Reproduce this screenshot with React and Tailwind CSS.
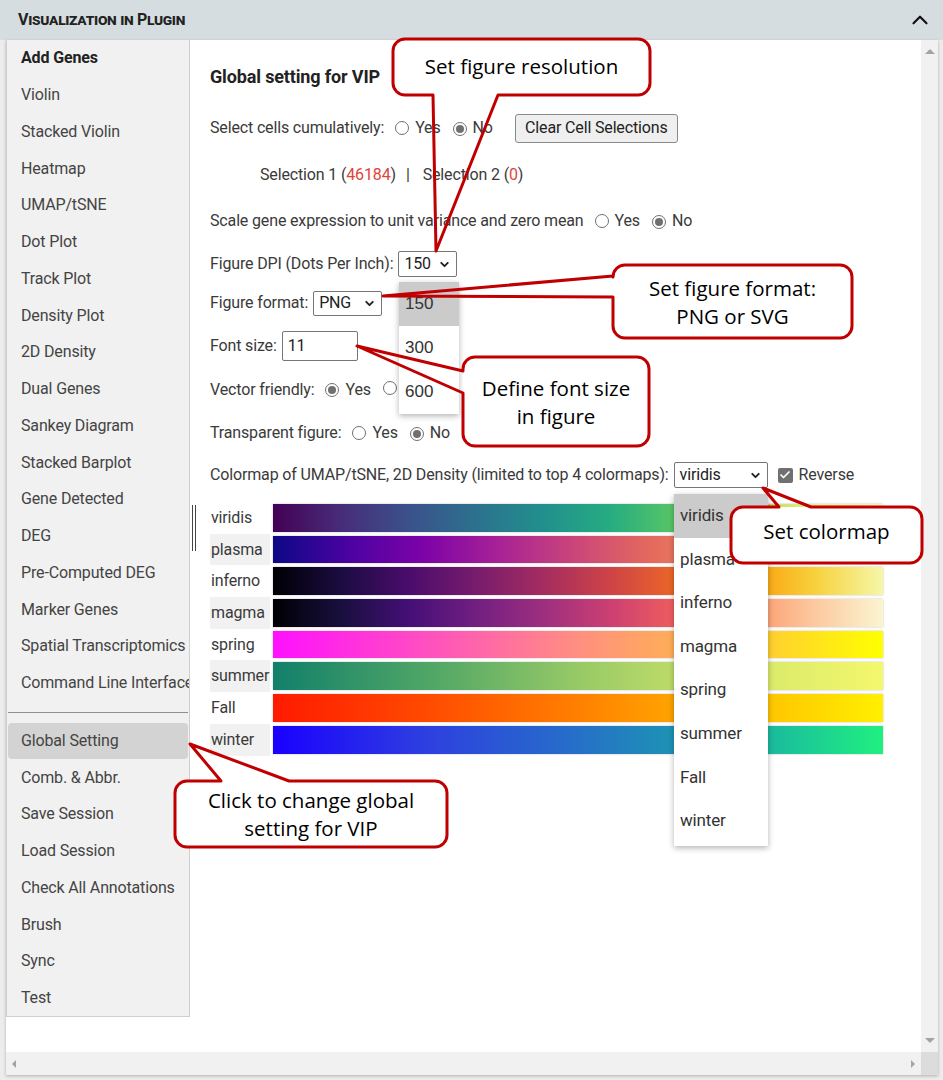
import { ChevronUp, ChevronDown, Check } from 'lucide-react';

const NAV_TOP = [
  'Add Genes', 'Violin', 'Stacked Violin', 'Heatmap', 'UMAP/tSNE', 'Dot Plot', 'Track Plot',
  'Density Plot', '2D Density', 'Dual Genes', 'Sankey Diagram', 'Stacked Barplot', 'Gene Detected',
  'DEG', 'Pre-Computed DEG', 'Marker Genes', 'Spatial Transcriptomics', 'Command Line Interface',
];
const NAV_BOTTOM = [
  'Global Setting', 'Comb. & Abbr.', 'Save Session', 'Load Session', 'Check All Annotations', 'Brush', 'Sync', 'Test',
];

const COLORMAPS = [
  { name: 'viridis', bar: 'bg-[linear-gradient(to_right,#440154,#472c7a,#3b518b,#2c718e,#21908d,#27ad81,#5cc863,#aadc32,#e8ef9c,#f6f9c4)]' },
  { name: 'plasma', bar: 'bg-[linear-gradient(to_right,#0d0887,#4c02a1,#7e03a8,#a92395,#cc4778,#e56b5d,#f39163,#f9c48a,#f4f3a0)]' },
  { name: 'inferno', bar: 'bg-[linear-gradient(to_right,#000004,#1b0c41,#4a0c6b,#781c6d,#a52c60,#cf4446,#ed6925,#fb9b06,#f7d13d,#f6f7a8)]' },
  { name: 'magma', bar: 'bg-[linear-gradient(to_right,#000004,#180f3d,#440f76,#721f81,#9e2f7f,#cd4071,#f1605d,#fd9668,#fcc9a0,#fbf5d0)]' },
  { name: 'spring', bar: 'bg-[linear-gradient(to_right,#ff10ff,#ff4fc0,#ff8f80,#ffc040,#ffff00)]' },
  { name: 'summer', bar: 'bg-[linear-gradient(to_right,#12806a,#4ea566,#97c966,#d2e66a,#f4f86c)]' },
  { name: 'Fall', bar: 'bg-[linear-gradient(to_right,#ff1a00,#ff4a00,#ff8000,#ffb800,#fff000)]' },
  { name: 'winter', bar: 'bg-[linear-gradient(to_right,#1a00ff,#2e3fe0,#2670c8,#18a8a8,#20f080)]' },
];

// rounded box with a pointer wedge on one edge; a<b along that edge
const calloutPath = ({ x, y, w, h, r, side, a, b, px, py }) => {
  let d = `M ${x + r} ${y}`;
  if (side === 'top') d += ` L ${a} ${y} L ${px} ${py} L ${b} ${y}`;
  d += ` L ${x + w - r} ${y} A ${r} ${r} 0 0 1 ${x + w} ${y + r}`;
  d += ` L ${x + w} ${y + h - r} A ${r} ${r} 0 0 1 ${x + w - r} ${y + h}`;
  if (side === 'bottom') d += ` L ${b} ${y + h} L ${px} ${py} L ${a} ${y + h}`;
  d += ` L ${x + r} ${y + h} A ${r} ${r} 0 0 1 ${x} ${y + h - r}`;
  if (side === 'left') d += ` L ${x} ${b} L ${px} ${py} L ${x} ${a}`;
  d += ` L ${x} ${y + r} A ${r} ${r} 0 0 1 ${x + r} ${y} Z`;
  return d;
};

const CALLOUTS = [
  { x: 393, y: 39, w: 257, h: 56, r: 12, side: 'bottom', a: 433, b: 498, px: 436, py: 251 },
  { x: 613, y: 265, w: 239, h: 73, r: 12, side: 'left', a: 276, b: 297, px: 383, py: 296 },
  { x: 463, y: 357, w: 186, h: 89, r: 12, side: 'left', a: 371, b: 393, px: 357, py: 346 },
  { x: 731, y: 507, w: 191, h: 56, r: 12, side: 'top', a: 779, b: 811, px: 763, py: 488 },
  { x: 175, y: 781, w: 272, h: 66, r: 12, side: 'top', a: 221, b: 289, px: 190, py: 744 },
];

function Radio({ checked }) {
  return (
    <span className="inline-flex h-[14px] w-[14px] shrink-0 items-center justify-center rounded-full border border-[#707070] bg-white">
      {checked && <span className="h-[8px] w-[8px] rounded-full bg-[#707070]" />}
    </span>
  );
}

function YesNo({ yes }) {
  return (
    <span className="ml-[11px] inline-flex items-center">
      <Radio checked={yes} />
      <span className="ml-[6px]">Yes</span>
      <span className="ml-[12px]"><Radio checked={!yes} /></span>
      <span className="ml-[6px]">No</span>
    </span>
  );
}

function FakeSelect({ value, className }) {
  return (
    <span className={`ml-[5px] inline-flex items-center justify-between rounded-[2px] border border-[#767676] bg-white pl-[5px] pr-[5px] text-[#222] ${className}`}>
      <span>{value}</span>
      <ChevronDown size={13} strokeWidth={3.5} className="text-[#222]" />
    </span>
  );
}

export default function App() {
  return (
    <div className="relative h-[1080px] w-[943px] overflow-hidden bg-[#ececec] font-['Roboto',sans-serif] text-[16px] tracking-[-0.15px] text-[#3a3a3a]">
      {/* panel header */}
      <header className="flex h-[40px] items-center justify-between bg-[#d5dde1] pl-[18px] pr-[10px]">
        <span className="font-['Roboto',sans-serif] text-[16px] font-bold tracking-[-0.3px] text-[#222] [font-variant:small-caps]">
          Visualization in Plugin
        </span>
        <ChevronUp size={26} strokeWidth={2} className="text-[#111]" />
      </header>

      <div className="ml-[6px] flex h-[1035px] w-[932px] bg-white shadow-[0_1px_3px_rgba(0,0,0,0.25)]">
        <div className="flex w-[915px] flex-col">
          <div className="flex flex-1">
            {/* sidebar */}
            <nav className="flex h-[977px] w-[184px] flex-col overflow-hidden border-x border-b border-[#cfcfcf] bg-[#f1f1f1] pl-[1px] pr-[1px]">
              {NAV_TOP.map((item, i) => (
                <div key={item} className={`flex h-[36.75px] shrink-0 items-center whitespace-nowrap pl-[13px] ${i === 0 ? 'font-bold text-[#222]' : 'text-[#444]'}`}>
                  {item}
                </div>
              ))}
              <div className="mb-[10px] mt-[10px] h-px shrink-0 bg-[#8f8f8f]" />
              {NAV_BOTTOM.map((item, i) => (
                <div key={item} className={`flex h-[36.75px] shrink-0 items-center whitespace-nowrap pl-[13px] text-[#444] ${i === 0 ? 'rounded-[4px] bg-[#d3d3d3]' : ''}`}>
                  {item}
                </div>
              ))}
            </nav>

            {/* resize handle gutter */}
            <div className="flex w-[7px] justify-center pt-[465px]">
              <div className="flex h-[46px] gap-[2px]">
                <span className="w-px bg-[#444]" />
                <span className="w-px bg-[#444]" />
              </div>
            </div>

            {/* main settings */}
            <main className="flex-1 pl-[13px] pt-[16px]">
              <div className="flex h-[40px] items-center text-[18px] font-bold text-[#222]">Global setting for VIP</div>

              <div className="flex h-[64px] items-center">
                <span>Select cells cumulatively:</span>
                <YesNo yes={false} />
                <span className="ml-[22px] flex h-[29px] w-[163px] items-center justify-center rounded-[3px] border border-[#8a8a8a] bg-[#efefef] text-[#222]">
                  Clear Cell Selections
                </span>
              </div>

              <div className="flex h-[30px] items-center pl-[50px]">
                <span>Selection 1 (<span className="text-[#e0443a]">46184</span>)</span>
                <span className="ml-[10px] mr-[13px]">|</span>
                <span>Selection 2 (<span className="text-[#e0443a]">0</span>)</span>
              </div>

              <div className="flex h-[62px] items-center">
                <span>Scale gene expression to unit variance and zero mean</span>
                <YesNo yes={false} />
              </div>

              <div className="flex h-[24px] items-center">
                <span>Figure DPI (Dots Per Inch):</span>
                <FakeSelect value="150" className="h-[26px] w-[59px]" />
              </div>

              <div className="flex h-[54px] items-center">
                <span>Figure format:</span>
                <FakeSelect value="PNG" className="h-[25px] w-[69px]" />
              </div>

              <div className="flex h-[32px] items-center">
                <span>Font size:</span>
                <span className="ml-[5px] flex h-[30px] w-[76px] items-center rounded-[2px] border border-[#767676] bg-white pl-[5px] text-[#222]">11</span>
              </div>

              <div className="flex h-[56px] items-center">
                <span>Vector friendly:</span>
                <YesNo yes />
              </div>

              <div className="flex h-[30px] items-center">
                <span>Transparent figure:</span>
                <YesNo yes={false} />
              </div>

              <div className="flex h-[54px] items-center">
                <span>Colormap of UMAP/tSNE, 2D Density (limited to top 4 colormaps):</span>
                <FakeSelect value="viridis" className="h-[26px] w-[94px]" />
                <span className="ml-[10px] flex h-[15px] w-[15px] items-center justify-center rounded-[2px] bg-[#707070]">
                  <Check size={12} strokeWidth={3.5} className="text-white" />
                </span>
                <span className="ml-[6px]">Reverse</span>
              </div>

              <div className="flex flex-col">
                {COLORMAPS.map((cm, i) => (
                  <div key={cm.name} className="flex h-[31.7px]">
                    <div className={`flex w-[60px] items-center pl-[1px] ${i % 2 === 1 ? 'bg-[#f1f1f1]' : ''}`}>{cm.name}</div>
                    <div className="py-[2px] pl-[3px]">
                      <div className={`h-full w-[610px] shadow-[0_0_2px_rgba(0,0,0,0.25)] ${cm.bar}`} />
                    </div>
                  </div>
                ))}
              </div>
            </main>
          </div>

          {/* horizontal scrollbar */}
          <div className="flex h-[23px] items-center justify-between bg-[#f1f1f1] px-[6px]">
            <span className="h-0 w-0 border-y-[4px] border-r-[4px] border-y-transparent border-r-[#a3a3a3]" />
            <span className="h-0 w-0 border-y-[4px] border-l-[4px] border-y-transparent border-l-[#a3a3a3]" />
          </div>
        </div>

        {/* vertical scrollbar */}
        <div className="flex w-[17px] flex-col">
          <div className="flex flex-1 flex-col items-center justify-between bg-[#f1f1f1] py-[9px]">
            <span className="h-0 w-0 border-x-[5px] border-b-[5px] border-x-transparent border-b-[#a3a3a3]" />
            <span className="h-0 w-0 border-x-[5px] border-t-[5px] border-x-transparent border-t-[#a3a3a3]" />
          </div>
          <div className="h-[23px] bg-[#dcdcdc]" />
        </div>
      </div>

      {/* open DPI dropdown */}
      <div className="absolute left-[399px] top-[282px] w-[60px] bg-white font-['Liberation_Sans',sans-serif] text-[17px] tracking-normal text-[#333] shadow-[0_2px_6px_rgba(0,0,0,0.3)]">
        {['150', '300', '600'].map((v, i) => (
          <div key={v} className={`flex h-[44px] items-center pl-[6px] ${i === 0 ? 'bg-[#cbcbcb]' : ''}`}>{v}</div>
        ))}
      </div>

      {/* open colormap dropdown */}
      <div className="absolute left-[674px] top-[494px] w-[94px] bg-white pb-[3px] text-[17px] text-[#333] shadow-[0_2px_6px_rgba(0,0,0,0.3)]">
        {COLORMAPS.map((cm, i) => (
          <div key={cm.name} className={`flex h-[43.6px] items-center pl-[6px] ${i === 0 ? 'bg-[#cbcbcb]' : ''}`}>{cm.name}</div>
        ))}
      </div>

      {/* callout shapes */}
      <svg className="pointer-events-none absolute left-0 top-0" width="943" height="1080">
        {CALLOUTS.map((c, i) => (
          <g key={i}>
            <rect x={c.x} y={c.y} width={c.w} height={c.h} rx={c.r} fill="#fff" />
            <path d={calloutPath(c)} fill="none" stroke="#c00000" strokeWidth="3" strokeLinejoin="round" />
          </g>
        ))}
      </svg>

      <div className="pointer-events-none absolute inset-0 font-['Open_Sans',sans-serif] text-[20.5px] leading-[28px] tracking-normal text-black">
        <div className="absolute left-[393px] top-[39px] flex h-[54px] w-[257px] items-center justify-center">Set figure resolution</div>
        <div className="absolute left-[613px] top-[265px] flex h-[73px] w-[239px] flex-col items-center justify-center">
          <span>Set figure format:</span>
          <span>PNG or SVG</span>
        </div>
        <div className="absolute left-[463px] top-[357px] flex h-[89px] w-[186px] flex-col items-center justify-center">
          <span>Define font size</span>
          <span>in figure</span>
        </div>
        <div className="absolute left-[731px] top-[507px] flex h-[48px] w-[191px] items-center justify-center">Set colormap</div>
        <div className="absolute left-[175px] top-[781px] flex h-[66px] w-[272px] flex-col items-center justify-center">
          <span>Click to change global</span>
          <span>setting for VIP</span>
        </div>
      </div>
    </div>
  );
}
